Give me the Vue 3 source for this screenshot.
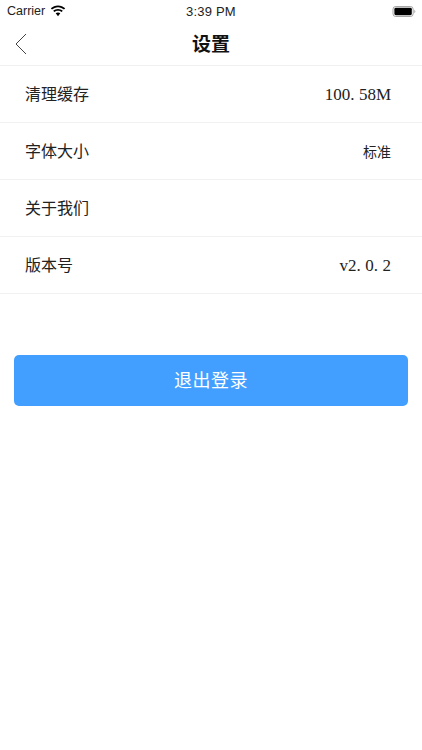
<script setup>
const rows = [
  { label: '清理缓存', parts: ['100', '58M'], cls: 'num' },
  { label: '字体大小', parts: ['标准'], cls: 'small' },
  { label: '关于我们', parts: [], cls: '' },
  { label: '版本号', parts: ['v2', '0', '2'], cls: 'num' }
]
</script>

<template>
  <div class="page">
    <div class="status">
      <div class="status-left">
        <span>Carrier</span>
        <svg class="wifi" width="16" height="12" viewBox="0 0 16 12">
          <path d="M8 2.200c2.300 0 4.400.9 6 2.400l1.200-1.300C13.300 1.500 10.800.4 8 .4S2.700 1.500.8 3.300L2 4.600c1.600-1.500 3.700-2.400 6-2.400z" fill="#000"/>
          <path d="M8 5.700c1.400 0 2.600.5 3.600 1.400l1.200-1.300C11.500 4.600 9.800 3.900 8 3.900s-3.500.7-4.800 1.900l1.200 1.300c1-.9 2.200-1.400 3.600-1.400z" fill="#000"/>
          <path d="M8 7.400c-.9 0-1.700.3-2.300.9L8 11.200l2.300-2.900c-.6-.6-1.400-.9-2.300-.9z" fill="#000"/>
        </svg>
      </div>
      <span class="time">3:39 PM</span>
      <svg class="battery" width="24" height="11" viewBox="0 0 25 12">
        <rect x="0.500" y="0.500" width="22" height="11" rx="3" fill="none" stroke="#9a9a9a"/>
        <rect x="2" y="2" width="19" height="8" rx="1.500" fill="#000"/>
        <path d="M23.800 4.200c.7.300 1 1 1 1.800s-.3 1.500-1 1.800z" fill="#9a9a9a"/>
      </svg>
    </div>

    <header class="nav">
      <svg class="back" width="12" height="22" viewBox="0 0 12 22">
        <path d="M11 1 1 11l10 10" fill="none" stroke="#444" stroke-width="1"/>
      </svg>
      <h1 class="title">设置</h1>
    </header>

    <ul class="list">
      <li v-for="row in rows" :key="row.label" class="row">
        <span class="label">{{ row.label }}</span>
        <span class="value" :class="row.cls">
          <template v-for="(part, i) in row.parts" :key="i"><span v-if="i > 0" class="dot">.</span>{{ part }}</template>
        </span>
      </li>
    </ul>

    <button class="logout" type="button">退出登录</button>
  </div>
</template>

<style scoped>
.page {
  width: 422px;
  height: 750px;
  overflow: hidden;
  background: #fff;
  font-family: "Liberation Serif", "Noto Sans CJK SC", serif;
  color: #111;
}
.status {
  height: 22px;
  display: flex;
  align-items: center;
  justify-content: space-between;
  padding: 0 6px 0 7px;
  position: relative;
  font-family: "Liberation Sans", sans-serif;
  font-size: 12.500px;
  color: #222;
}
.status-left {
  display: flex;
  align-items: center;
  gap: 5px;
}
.wifi { display: block; }
.time {
  position: absolute;
  left: 0;
  right: 0;
  text-align: center;
  font-size: 13px;
  letter-spacing: 0.200px;
}
.battery { display: block; }
.nav {
  height: 41px;
  padding-bottom: 2px;
  display: flex;
  align-items: center;
  justify-content: center;
  position: relative;
  border-bottom: 1px solid #f1f1f1;
}
.back {
  position: absolute;
  left: 15px;
  top: 11px;
}
.title {
  margin: 0;
  font-size: 19px;
  font-weight: 700;
  color: #111;
}
.list {
  list-style: none;
  margin: 0;
  padding: 0;
}
.row {
  height: 54px;
  display: flex;
  align-items: center;
  justify-content: space-between;
  padding: 0 31px 2px 25px;
  border-bottom: 1px solid #f1f1f1;
  font-size: 16px;
}
.label { color: #222; }
.value { color: #222; }
.num {
  font-size: 17px;
  padding-top: 4px;
}
.dot { margin-right: 4.500px; }
.small {
  font-size: 14px;
  padding-top: 2px;
}
.logout {
  display: block;
  width: 394px;
  height: 51px;
  margin: 60.500px 14px 0;
  padding: 0 0 3px;
  border: 0;
  border-radius: 5px;
  background: #429fff;
  color: #fff;
  font-family: "Noto Sans CJK SC", sans-serif;
  font-size: 18px;
  letter-spacing: 0.500px;
}
</style>
